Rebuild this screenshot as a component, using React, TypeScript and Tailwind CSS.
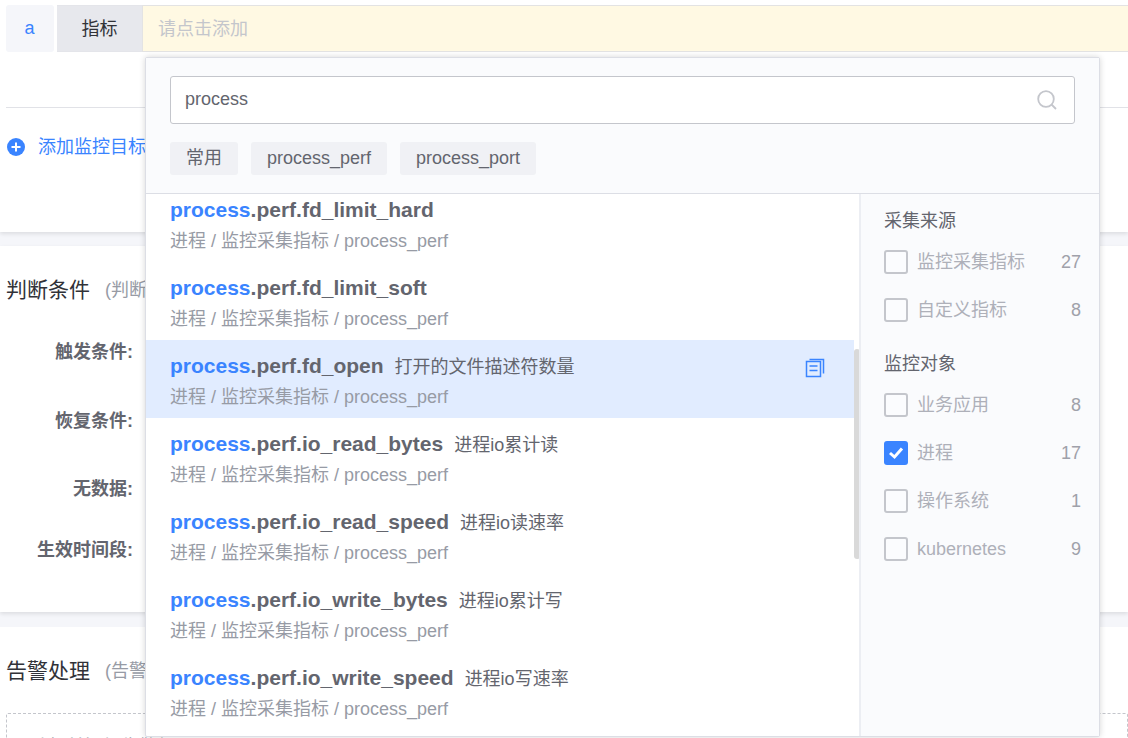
import React from "react";

const FONT = { fontFamily: '"Liberation Sans","Noto Sans CJK SC",sans-serif' };

const rows = [
  { name: ".perf.fd_limit_hard" },
  { name: ".perf.fd_limit_soft" },
  { name: ".perf.fd_open", desc: "打开的文件描述符数量", active: true },
  { name: ".perf.io_read_bytes", desc: "进程io累计读" },
  { name: ".perf.io_read_speed", desc: "进程io读速率" },
  { name: ".perf.io_write_bytes", desc: "进程io累计写" },
  { name: ".perf.io_write_speed", desc: "进程io写速率" },
];

function Check({ label, count, checked }: { label: string; count: number; checked?: boolean }) {
  return (
    <div className="flex items-center h-[24px] mb-[24px]">
      {checked ? (
        <span className="w-[24px] h-[24px] rounded-[3px] bg-[#3a84ff] flex items-center justify-center shrink-0">
          <svg width="18" height="16" viewBox="0 0 18 16" fill="none">
            <path d="M3 8L7.5 12L15 3.5" stroke="#fff" strokeWidth="3" />
          </svg>
        </span>
      ) : (
        <span className="w-[24px] h-[24px] rounded-[3px] border-2 border-[#c4c6cc] bg-[#fbfcfe] shrink-0" />
      )}
      <span className="ml-[9px] text-[18px] text-[#aeb0b9] flex-1 leading-[24px]">{label}</span>
      <span className="text-[18px] text-[#9fa1aa] leading-[24px]">{count}</span>
    </div>
  );
}

function Row({ name, desc, active }: { name: string; desc?: string; active?: boolean }) {
  return (
    <div className={`relative h-[78px] pl-[24px] pt-[10px] w-[708px] ${active ? "bg-[#e1ecff]" : "bg-white"}`}>
      <div className="flex items-baseline h-[32px] leading-[31px]">
        <span className="text-[21px] font-bold text-[#3a84ff]">process</span>
        <span className="text-[21px] font-bold text-[#63656e]">{name}</span>
        {desc && <span className="ml-[11px] text-[18px] text-[#63656e]">{desc}</span>}
      </div>
      <div className="text-[18px] text-[#979ba5] leading-[31px]">进程 / 监控采集指标 / process_perf</div>
      {active && (
        <svg className="absolute right-[29px] top-[18px]" width="20" height="20" viewBox="0 0 20 20" fill="none" stroke="#3a84ff" strokeWidth="1.5">
          <path d="M1.5 3.5H15.5V18.5H1.5Z" />
          <path d="M4.5 1.5H18.5V15.5" />
          <path d="M4.5 8H12.5M4.5 12.5H12.5" />
        </svg>
      )}
    </div>
  );
}

function Tag({ children, w }: { children: React.ReactNode; w: string }) {
  return (
    <span className={`h-[33px] rounded-[3px] bg-[#f0f1f5] text-[18px] text-[#63656e] flex items-center justify-center ${w}`}>
      {children}
    </span>
  );
}

const label = "w-[127px] text-right text-[18px] font-bold text-[#63656e] leading-[24px]";

export default function App() {
  return (
    <div className="relative w-[1128px] h-[738px] overflow-hidden bg-white" style={FONT}>
      {/* page */}
      <div className="h-[232px] shadow-[0_2px_4px_rgba(0,0,0,0.1)] relative">
        <div className="pt-[5px] pl-[6px] flex">
          <div className="w-[48px] h-[47px] rounded-[3px] bg-[#f5f6fa] text-[#3a84ff] text-[18px] flex items-center justify-center pr-[1px]">a</div>
          <div className="ml-[3px] w-[85px] h-[47px] bg-[#e7e8ed] text-[#313238] text-[18px] flex items-center justify-center border-y border-[#e4e5ea] pt-[2px]">指标</div>
          <div className="flex-1 h-[47px] bg-[#fff9e3] border-y border-l border-[#e3e3e3] text-[#c4c6cc] text-[18px] pl-[15px] pt-[2px] flex items-center">请点击添加</div>
        </div>
        <div className="mt-[55px] ml-[6px] h-px bg-[#e1e2e7]" />
        <div className="mt-[27px] ml-[7px] flex items-center h-[24px]">
          <svg width="18" height="18" viewBox="0 0 18 18">
            <circle cx="9" cy="9" r="9" fill="#3a84ff" />
            <path d="M9 4.5V13.5M4.5 9H13.5" stroke="#fff" strokeWidth="2" />
          </svg>
          <span className="ml-[13px] text-[18px] text-[#3a84ff]">添加监控目标</span>
        </div>
      </div>
      <div className="h-[14px] bg-[#f5f6fa]" />
      <div className="h-[366px] shadow-[0_2px_4px_rgba(0,0,0,0.1)] relative pt-[30px] pl-[6px]">
        <div className="flex items-center h-[28px]">
          <span className="text-[21px] text-[#313238]">判断条件</span>
          <span className="ml-[15px] text-[18px] text-[#979ba5]">(判断</span>
        </div>
        <div className={`mt-[36px] ${label}`}>触发条件:</div>
        <div className={`mt-[45px] ${label}`}>恢复条件:</div>
        <div className={`mt-[44px] ${label}`}>无数据:</div>
        <div className={`mt-[37px] ${label}`}>生效时间段:</div>
      </div>
      <div className="h-[15px] bg-[#f5f6fa]" />
      <div className="pt-[30px] pl-[6px]">
        <div className="flex items-center h-[28px]">
          <span className="text-[21px] text-[#313238]">告警处理</span>
          <span className="ml-[15px] text-[18px] text-[#979ba5]">(告警</span>
        </div>
        <div className="mt-[28px] h-[60px] border border-dashed border-[#c4c6cc] rounded-[2px] pl-[24px] pt-[20px] text-[18px] text-[#979ba5] whitespace-nowrap">
          选择并添加告警组
        </div>
      </div>

      {/* dropdown */}
      <div className="absolute left-[145px] top-[57px] w-[955px] h-[680px] bg-white flex flex-col border border-[#dcdee5] rounded-[2px] shadow-[0_0_6px_rgba(0,0,0,0.16)]">
        <div className="h-[136px] bg-[#fafbfd] border-b border-[#dcdee5] pt-[18px] pl-[24px] pr-[24px] shrink-0">
          <div className="h-[48px] bg-white border border-[#c4c6cc] rounded-[3px] flex items-center pl-[14px] pr-[16px]">
            <span className="flex-1 text-[18px] text-[#63656e] pb-[2px]">process</span>
            <svg width="22" height="22" viewBox="0 0 22 22" fill="none" stroke="#c4c6cc" strokeWidth="1.8">
              <circle cx="10" cy="10" r="7.8" />
              <path d="M15.5 15.5L20 20" />
            </svg>
          </div>
          <div className="mt-[18px] flex gap-[13px]">
            <Tag w="w-[68px]">常用</Tag>
            <Tag w="w-[136px]">process_perf</Tag>
            <Tag w="w-[136px]">process_port</Tag>
          </div>
        </div>
        <div className="flex flex-1 min-h-0">
          <div className="relative w-[715px] overflow-hidden border-r-2 border-[#eceef3]">
            <div className="-mt-[10px]">
              {rows.map((r) => (
                <Row key={r.name} {...r} />
              ))}
            </div>
            <div className="absolute left-[708px] top-[155px] w-[6px] h-[210px] rounded-[3px] bg-[#d9d9d9]" />
          </div>
          <div className="flex-1 bg-[#fafbfd] pl-[23px] pr-[18px] pt-[14px]">
            <div className="text-[18px] text-[#63656e] leading-[26px] mb-[16px]">采集来源</div>
            <Check label="监控采集指标" count={27} />
            <Check label="自定义指标" count={8} />
            <div className="text-[18px] text-[#63656e] leading-[26px] mt-[29px] mb-[16px]">监控对象</div>
            <Check label="业务应用" count={8} />
            <Check label="进程" count={17} checked />
            <Check label="操作系统" count={1} />
            <Check label="kubernetes" count={9} />
          </div>
        </div>
      </div>
    </div>
  );
}
